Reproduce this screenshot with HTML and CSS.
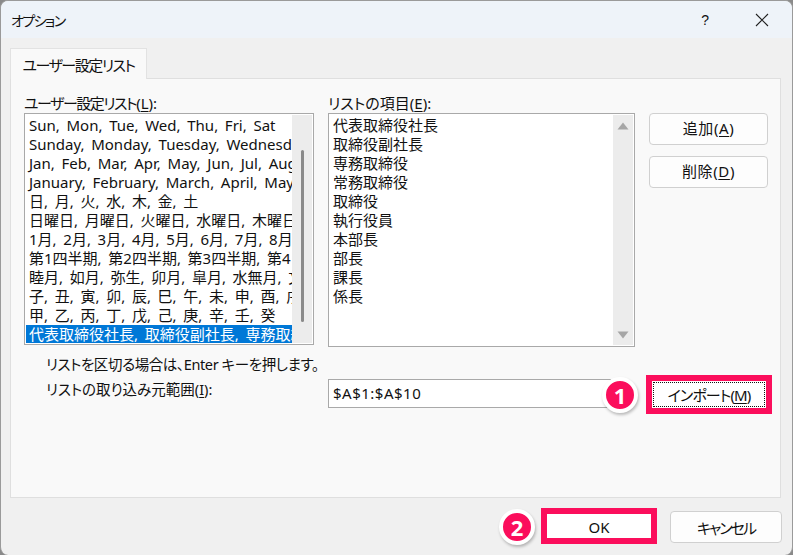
FILE: index.html
```html
<!DOCTYPE html>
<html lang="ja">
<head>
<meta charset="utf-8">
<title>オプション</title>
<link rel="stylesheet" href="styles.css">
</head>
<body>
<div class="dialog">
  <header class="titlebar">
    <span class="title">オプション</span>
    <span class="help">?</span>
    <svg class="close" width="14" height="14" viewBox="0 0 14 14"><path d="M1 1L13 13M13 1L1 13" stroke="#222" stroke-width="1.1" fill="none"/></svg>
  </header>
  <div class="tabs"><div class="tab"><span class="tight">ユーザー設定リスト</span></div></div>
  <main class="panel">
    <div class="columns">
      <section class="col-left">
        <label class="cap"><span class="tight">ユーザー設定リスト</span>(<u>L</u>):</label>
        <div class="listbox left-list">
          <ul class="items">
            <li>Sun, Mon, Tue, Wed, Thu, Fri, Sat</li>
            <li>Sunday, Monday, Tuesday, Wednesday</li>
            <li>Jan, Feb, Mar, Apr, May, Jun, Jul, Aug</li>
            <li>January, February, March, April, May</li>
            <li>日, 月, 火, 水, 木, 金, 土</li>
            <li>日曜日, 月曜日, 火曜日, 水曜日, 木曜日</li>
            <li>1月, 2月, 3月, 4月, 5月, 6月, 7月, 8月</li>
            <li>第1四半期, 第2四半期, 第3四半期, 第4</li>
            <li>睦月, 如月, 弥生, 卯月, 皐月, 水無月, 文</li>
            <li>子, 丑, 寅, 卯, 辰, 巳, 午, 未, 申, 酉, 戌</li>
            <li>甲, 乙, 丙, 丁, 戊, 己, 庚, 辛, 壬, 癸</li>
            <li class="selected">代表取締役社長, 取締役副社長, 専務取締</li>
          </ul>
          <div class="scroll"><div class="thumb"></div></div>
        </div>
      </section>
      <section class="col-mid">
        <label class="cap">リストの項目(<u>E</u>):</label>
        <div class="listbox right-list">
          <ul class="items">
            <li>代表取締役社長</li>
            <li>取締役副社長</li>
            <li>専務取締役</li>
            <li>常務取締役</li>
            <li>取締役</li>
            <li>執行役員</li>
            <li>本部長</li>
            <li>部長</li>
            <li>課長</li>
            <li>係長</li>
          </ul>
          <div class="scroll arrows">
            <svg width="12" height="8" viewBox="0 0 12 8"><path d="M6 0.5L11.5 7.5H0.5Z" fill="#a6a6a6"/></svg>
            <svg width="12" height="8" viewBox="0 0 12 8"><path d="M6 7.5L11.5 0.5H0.5Z" fill="#a6a6a6"/></svg>
          </div>
        </div>
      </section>
      <section class="col-btns">
        <button class="btn side">追加(<u>A</u>)</button>
        <button class="btn side">削除(<u>D</u>)</button>
      </section>
    </div>
    <p class="hint">リストを区切る場合は、Enter キーを押します。</p>
    <div class="import-row">
      <label class="import-label">リストの取り込み元範囲(<u>I</u>):</label>
      <div class="range">$A$1:$A$10</div>
      <div class="import-wrap">
        <span class="badge badge-one">1</span>
        <button class="btn import-btn"><span class="focus">インポート(<u>M</u>)</span></button>
      </div>
    </div>
  </main>
  <footer class="footer">
    <div class="ok-wrap">
      <span class="badge badge-two">2</span>
      <button class="ok">OK</button>
    </div>
    <button class="btn cancel">キャンセル</button>
  </footer>
</div>
</body>
</html>
```
FILE: styles.css
```css
* { box-sizing: border-box; }
html, body { margin: 0; padding: 0; }
body {
  width: 793px;
  height: 555px;
  overflow: hidden;
  background: #8a8a8a;
  font-family: "Noto Sans", "Noto Sans CJK JP", sans-serif;
  font-size: 15px;
  font-feature-settings: "palt";
  word-spacing: 2.8px;
  color: #111;
}
u { text-underline-offset: 2px; text-decoration-thickness: 1px; }
ul { list-style: none; margin: 0; padding: 0; }
p { margin: 0; }
.tight { letter-spacing: -1.5px; }
.dialog {
  width: 793px;
  height: 555px;
  display: flex;
  flex-direction: column;
  background: #f0f0f0;
  border: 1px solid #9a9a9a;
  border-bottom: 0;
  border-radius: 8px;
  overflow: hidden;
}
.titlebar {
  height: 37px;
  flex: none;
  display: flex;
  align-items: center;
  padding: 0 23px 0 10px;
  background: #eef3f9;
}
.title { font-size: 14px; letter-spacing: -1.6px; flex: 1; }
.help { font-size: 14px; margin-right: 46px; font-family: "Liberation Sans", sans-serif; }
.tabs { flex: none; height: 40px; display: flex; align-items: flex-end; padding-left: 9px; }
.tab {
  width: 137px;
  height: 31px;
  margin-bottom: -1px;
  position: relative;
  background: #f9f9f9;
  border: 1px solid #e2e2e2;
  border-bottom: 0;
  display: flex;
  align-items: center;
  justify-content: center;
  z-index: 1;
}
.panel {
  flex: none;
  width: 771px;
  height: 420px;
  margin-left: 9px;
  background: #f9f9f9;
  border: 1px solid #dfdfdf;
  padding: 14px 12px 0 13px;
}
.columns { display: flex; height: 255px; }
.cap { display: block; height: 20px; line-height: 20px; }
.col-left { width: 304px; flex: none; }
.col-mid { width: 321px; flex: none; }
.col-btns { display: flex; flex-direction: column; gap: 11px; padding-top: 20px; }
.listbox {
  display: flex;
  background: #fff;
  border: 1px solid #a9a9a9;
  padding: 1px;
  overflow: hidden;
}
.left-list { width: 290px; height: 232px; }
.right-list { width: 307px; height: 234px; }
.items { flex: 1; min-width: 0; overflow: hidden; padding: 1px 0 0 0; }
.items li {
  height: 19px;
  line-height: 19px;
  padding-left: 3px;
  white-space: nowrap;
  overflow: hidden;
}
.items .selected { background: #0078d7; color: #fff; }
.scroll { width: 20px; flex: none; background: #ececec; position: relative; display: flex; justify-content: center; }
.thumb { width: 3px; height: 172px; margin-top: 35px; background: #8a8a8a; border-radius: 2px; }
.arrows { flex-direction: column; justify-content: space-between; align-items: center; padding: 7px 0 6px; }
.btn {
  width: 119px;
  height: 32px;
  padding: 0;
  font: inherit;
  font-feature-settings: "palt";
  word-spacing: inherit;
  color: inherit;
  background: #fdfdfd;
  border: 1px solid #d0d0d0;
  border-radius: 4px;
}
.side { padding-bottom: 3px; letter-spacing: .6px; }
.hint {
  padding-left: 22px;
  height: 20px;
  line-height: 20px;
  margin-top: 6px;
  font-size: 14.5px;
  letter-spacing: -.4px;
  word-spacing: 0;
}
.import-row { display: flex; height: 50px; }
.import-label { width: 304px; flex: none; padding: 5px 0 0 22px; line-height: 20px; font-size: 14.5px; }
.range {
  width: 283px;
  height: 29px;
  margin-top: 5px;
  flex: none;
  background: #fff;
  border: 1px solid #a9a9a9;
  padding-left: 4px;
  line-height: 27px;
  letter-spacing: .5px;
}
.import-wrap { position: relative; margin-left: 41px; margin-top: 7px; }
.import-btn {
  display: block;
  width: 114px;
  height: 27px;
  background: #fff;
  border: 0;
  border-radius: 0;
  outline: 6px solid #fb0e5c;
  outline-offset: 0;
}
.focus {
  display: flex;
  align-items: center;
  justify-content: center;
  white-space: pre;
  margin: 1px;
  height: 25px;
  border: 1px dotted #111;
  letter-spacing: -.9px;
}
.badge {
  position: absolute;
  width: 36px;
  height: 36px;
  border: 4px solid #fff;
  border-radius: 50%;
  background: #fb0e5c;
  color: #fff;
  font-weight: 700;
  font-size: 22px;
  display: flex;
  align-items: center;
  justify-content: center;
  box-shadow: 1px 2px 3px rgba(0, 0, 0, .25);
  z-index: 2;
}
.badge-one { left: -50px; top: -4px; }
.badge-two { left: -42px; top: -2px; }
.footer {
  flex: 1;
  display: flex;
  justify-content: flex-end;
  align-items: flex-start;
  padding: 13px 10px 0 0;
  gap: 13px;
}
.ok-wrap { position: relative; }
.ok {
  display: block;
  width: 116px;
  height: 36px;
  margin-top: -3px;
  padding: 1px 0 0;
  font: inherit;
  color: inherit;
  background: #fff;
  border: 6px solid #fb0e5c;
}
.cancel { width: 112px; letter-spacing: -2px; }
```
